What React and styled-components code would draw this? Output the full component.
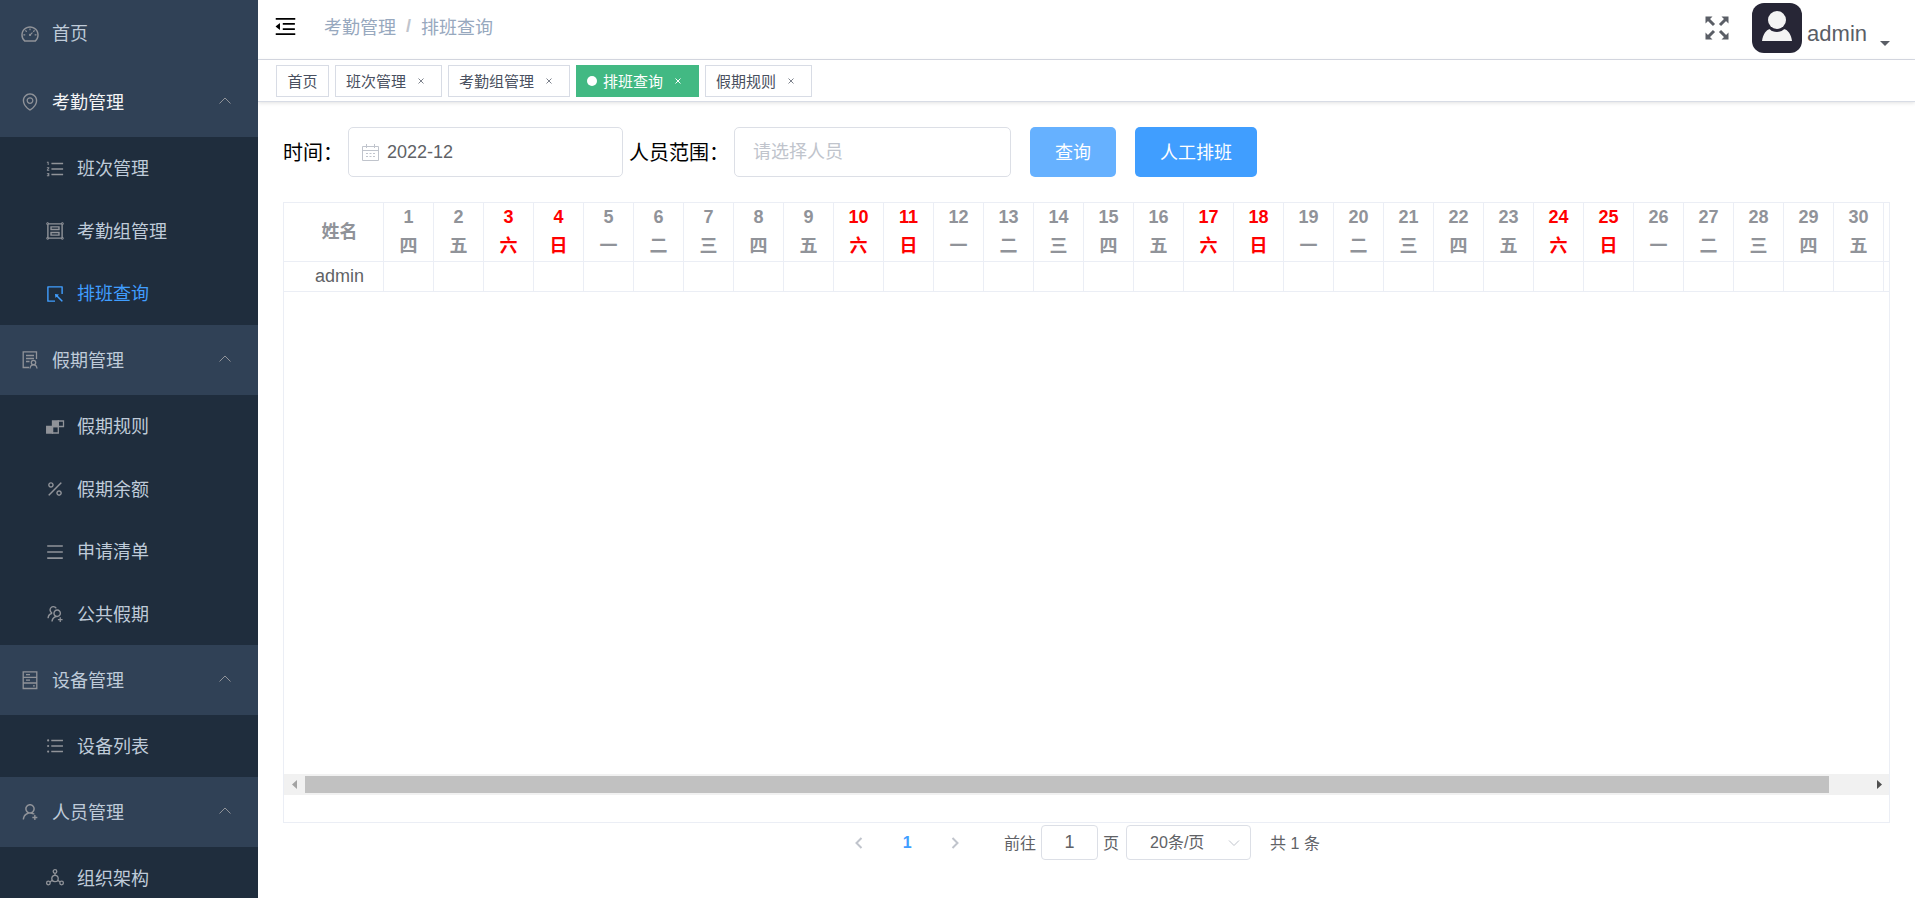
import React from 'react';
import styled, { createGlobalStyle } from 'styled-components';
import {
  AiOutlineDashboard,
  AiOutlineEnvironment,
  AiOutlineOrderedList,
  AiOutlineGroup,
  AiOutlineSelect,
  AiOutlinePercentage,
  AiOutlineMenu,
  AiOutlineUsergroupAdd,
  AiOutlineUnorderedList,
  AiOutlineUserAdd,
  AiOutlineMenuFold,
} from 'react-icons/ai';

const GlobalStyle = createGlobalStyle`
  * { box-sizing: border-box; }
  body {
    margin: 0;
    background: #fff;
    color: #606266;
    font-family: "Liberation Sans", "Noto Sans CJK SC", sans-serif;
    font-size: 18px;
  }
  button, input, select { font: inherit; color: inherit; margin: 0; }
  a { color: inherit; text-decoration: none; }
`;

const Page = styled.div`
  display: flex;
  min-height: 100vh;
`;

/* ---------- sidebar ---------- */

const Sidebar = styled.nav`
  flex: none;
  width: 258px;
  height: 100vh;
  position: sticky;
  top: 0;
  overflow: hidden;
  background: #304156;
  color: #bfcbd9;
  white-space: nowrap;
`;

const MenuIcon = styled.span`
  display: flex;
  color: ${(p) => (p.$active ? '#409eff' : '#909399')};
  svg { width: 20px; height: 20px; }
`;

const MenuText = styled.span`
  flex: 1;
  padding-bottom: 3px;
`;

const HomeLink = styled.a`
  display: flex;
  align-items: center;
  gap: 12px;
  height: 67px;
  padding-left: 20px;
`;

const GroupButton = styled.button`
  display: flex;
  align-items: center;
  gap: 12px;
  width: 100%;
  height: 70px;
  padding: 0 27px 0 20px;
  border: 0;
  background: transparent;
  color: ${(p) => (p.$active ? '#f4f4f5' : '#bfcbd9')};
  text-align: left;
`;

const SubMenu = styled.ul`
  margin: 0;
  padding: 0;
  list-style: none;
  background: #1f2d3d;
`;

const SubItem = styled.li`
  height: 62px;
  &:nth-child(odd):not(:only-child) { height: 63px; }
`;

const SubLink = styled.a`
  display: flex;
  align-items: center;
  gap: 12px;
  height: 100%;
  padding-left: 45px;
  color: ${(p) => (p.$active ? '#409eff' : '#bfcbd9')};
`;

const Chevron = styled.svg`
  width: 12px;
  height: 12px;
  fill: none;
  stroke: ${(p) => p.$color || '#909399'};
  stroke-width: ${(p) => p.$weight || 1};
`;

const LineIcon = ({ children }) => (
  <svg viewBox="0 0 20 20" fill="none" stroke="currentColor" strokeWidth="1.3" aria-hidden="true">
    {children}
  </svg>
);

const HolidayIcon = () => (
  <LineIcon>
    <path d="M9 17.500H3.200V1.800h13.300V9M6 5.500h8M6 8.500h8M6 11.500h3.500M3 17.500h6" />
    <circle cx="13.500" cy="12.500" r="2.200" />
    <path d="M10 18.500c.2-2.500 1.300-3.700 3.500-3.700s3.300 1.200 3.500 3.700" />
  </LineIcon>
);

const RulesIcon = () => (
  <LineIcon>
    <path d="M1.700 9.500h5.800v6.500H1.700zM7.500 4h5.800v5.500H7.500z" fill="currentColor" />
    <path d="M7.500 9.500h5.800V16H7.500zM13.300 4h5.200v5.500h-5.200z" />
  </LineIcon>
);

const DeviceIcon = () => (
  <LineIcon>
    <path d="M3.200 1.800h13.600v16.700H3.200zM3.200 7.400h13.600M3.200 13h13.600M6 4.600h4M6 10.200h4M13 15.800h1.800" />
  </LineIcon>
);

const OrganizationIcon = () => (
  <LineIcon>
    <circle cx="10" cy="10.500" r="3.200" />
    <circle cx="10" cy="3.500" r="1.800" />
    <circle cx="3.400" cy="15" r="1.800" />
    <circle cx="16.600" cy="15" r="1.800" />
    <path d="M10 5.300v2M5 14l2.200-1.700M15 14l-2.200-1.700" />
  </LineIcon>
);

const menu = [
  {
    label: '考勤管理',
    icon: AiOutlineEnvironment,
    active: true,
    items: [
      { label: '班次管理', icon: AiOutlineOrderedList },
      { label: '考勤组管理', icon: AiOutlineGroup },
      { label: '排班查询', icon: AiOutlineSelect, active: true },
    ],
  },
  {
    label: '假期管理',
    icon: HolidayIcon,
    items: [
      { label: '假期规则', icon: RulesIcon },
      { label: '假期余额', icon: AiOutlinePercentage },
      { label: '申请清单', icon: AiOutlineMenu },
      { label: '公共假期', icon: AiOutlineUsergroupAdd },
    ],
  },
  {
    label: '设备管理',
    icon: DeviceIcon,
    items: [{ label: '设备列表', icon: AiOutlineUnorderedList }],
  },
  {
    label: '人员管理',
    icon: AiOutlineUserAdd,
    items: [{ label: '组织架构', icon: OrganizationIcon }],
  },
];

function MenuGroup({ group }) {
  const Icon = group.icon;
  return (
    <>
      <GroupButton type="button" aria-expanded="true" $active={group.active}>
        <MenuIcon><Icon /></MenuIcon>
        <MenuText>{group.label}</MenuText>
        <Chevron viewBox="0 0 12 12" aria-hidden="true"><path d="M.5 7.500 6 2l5.500 5.500" /></Chevron>
      </GroupButton>
      <SubMenu>
        {group.items.map((item) => {
          const ItemIcon = item.icon;
          return (
            <SubItem key={item.label}>
              <SubLink href="#" $active={item.active}>
                <MenuIcon $active={item.active}><ItemIcon /></MenuIcon>
                <MenuText>{item.label}</MenuText>
              </SubLink>
            </SubItem>
          );
        })}
      </SubMenu>
    </>
  );
}

/* ---------- top bar ---------- */

const Main = styled.div`
  flex: 1;
  min-width: 0;
  display: flex;
  flex-direction: column;
`;

const TopBar = styled.header`
  display: flex;
  align-items: flex-start;
  height: 60px;
  padding: 0 25px 0 15px;
  border-bottom: 1px solid #d8dce5;
`;

const IconButton = styled.button`
  display: flex;
  padding: 0;
  border: 0;
  background: transparent;
  color: ${(p) => p.$color};
  svg { width: ${(p) => p.$size}px; height: ${(p) => p.$size}px; }
`;

const FoldSlot = styled.div`
  display: flex;
  align-items: center;
  height: 53px;
`;

const Breadcrumb = styled.nav`
  display: flex;
  flex: 1;
  align-items: center;
  gap: 10px;
  height: 52px;
  padding-left: 26px;
  color: #97a8be;
`;

const Slash = styled.span`
  color: #c0c4cc;
  font-weight: bold;
`;

const UserArea = styled.div`
  display: flex;
  align-items: center;
  height: 56px;
`;

const UserButton = styled.button`
  display: flex;
  align-items: flex-end;
  margin-left: 23px;
  padding: 0;
  border: 0;
  background: transparent;
  color: #5a5e66;
`;

const Avatar = styled.svg`
  width: 50px;
  height: 50px;
`;

const UserName = styled.span`
  padding: 0 13px 6px 5px;
  font-size: 22px;
  line-height: 26px;
`;

const Caret = styled.span`
  margin-bottom: 7px;
  border: 5px solid transparent;
  border-top-color: #5a5e66;
  border-bottom: 0;
`;

/* ---------- page tabs ---------- */

const TagBar = styled.div`
  display: flex;
  align-items: center;
  gap: 6px;
  height: 42px;
  padding: 0 18px;
  border-bottom: 1px solid #d8dce5;
  box-shadow: 0 1px 4px rgba(0, 0, 0, 0.12);
`;

const Tag = styled.div`
  display: flex;
  align-items: center;
  justify-content: center;
  min-width: 53px;
  height: 32px;
  padding: 0 10px;
  border: 1px solid ${(p) => (p.$active ? '#42b983' : '#d8dce5')};
  background: ${(p) => (p.$active ? '#42b983' : '#fff')};
  color: ${(p) => (p.$active ? '#fff' : '#495060')};
  font-size: 15px;
  white-space: nowrap;
`;

const Dot = styled.span`
  width: 10px;
  height: 10px;
  margin-right: 6px;
  border-radius: 50%;
  background: #fff;
`;

const CloseButton = styled.button`
  display: flex;
  align-items: center;
  justify-content: center;
  width: 20px;
  height: 20px;
  margin-left: 5px;
  padding: 1px 0 0;
  border: 0;
  background: transparent;
  color: ${(p) => (p.$active ? '#fff' : '#7d828c')};
  svg { width: 6px; height: 6px; }
`;

const tags = [
  { label: '首页', fixed: true },
  { label: '班次管理' },
  { label: '考勤组管理' },
  { label: '排班查询', active: true },
  { label: '假期规则' },
];

/* ---------- filters ---------- */

const Content = styled.main`
  flex: 1;
  display: flex;
  flex-direction: column;
  min-width: 0;
  padding: 25px 25px 38px;
`;

const FilterBar = styled.form`
  display: flex;
  align-items: center;
  margin-bottom: 25px;
`;

const FilterLabel = styled.label`
  margin-right: 5px;
  padding-bottom: 2px;
  color: #000;
  font-size: 20px;
  white-space: nowrap;
`;

const Field = styled.div`
  display: flex;
  align-items: center;
  gap: 8px;
  width: ${(p) => p.$width}px;
  height: 50px;
  margin-right: ${(p) => p.$after}px;
  padding: 0 ${(p) => p.$inset}px;
  border: 1px solid #dcdfe6;
  border-radius: 5px;
  svg { flex: none; width: 17px; height: 17px; }
`;

const TextInput = styled.input`
  flex: 1;
  min-width: 0;
  height: 46px;
  padding: 0;
  border: 0;
  outline: 0;
  background: transparent;
  &::placeholder { color: #c0c4cc; opacity: 1; }
`;

const PrimaryButton = styled.button`
  height: 50px;
  margin-right: 19px;
  padding: 0 25px 2px;
  border: 0;
  border-radius: 5px;
  background: ${(p) => (p.$hover ? '#66b1ff' : '#409eff')};
  color: #fff;
  white-space: nowrap;
`;

/* ---------- schedule table ---------- */

const TablePanel = styled.section`
  flex: 1;
  display: flex;
  flex-direction: column;
  padding-bottom: 27px;
  border: 1px solid #ebeef5;
`;

const TableViewport = styled.div`
  flex: 1;
  overflow: hidden;
`;

const Table = styled.table`
  width: 100%;
  min-width: 1600px;
  border-spacing: 0;
  table-layout: fixed;
  line-height: 29px;
`;

const Cell = styled.td`
  width: 50px;
  height: 30px;
  padding: 0;
  border: solid #ebeef5;
  border-width: 0 1px 1px 0;
  text-align: center;
`;

const EdgeCell = styled(Cell)`
  width: auto;
  border-right: 0;
`;

const HeadCell = styled(Cell)`
  color: ${(p) => (p.$weekend ? '#f00' : '#909399')};
  font-weight: bold;
`;

const NameHead = styled(HeadCell)`
  width: 100px;
  padding-left: 12px;
`;

const NameCell = styled(Cell)`
  padding-left: 12px;
`;

const DayLine = styled.div`
  height: 29px;
`;

const ScrollTrack = styled.div`
  display: flex;
  height: 21px;
  background: #f1f1f1;
`;

const ScrollArrow = styled.svg`
  flex: none;
  width: 21px;
  height: 21px;
  fill: ${(p) => p.$color};
`;

const ThumbLane = styled.div`
  flex: 1;
  padding: 2px 0;
`;

const Thumb = styled.div`
  width: ${(p) => p.$share}%;
  height: 17px;
  background: #c1c1c1;
`;

const weekdays = ['日', '一', '二', '三', '四', '五', '六'];
const days = Array.from({ length: 30 }, (_, i) => {
  const weekday = (i + 4) % 7;
  return { date: i + 1, name: weekdays[weekday], weekend: weekday === 0 || weekday === 6 };
});

/* ---------- pagination ---------- */

const Pagination = styled.div`
  display: flex;
  align-items: center;
  justify-content: center;
  height: 35px;
  margin-top: 2px;
  padding-right: 16px;
  font-size: 16px;
  white-space: nowrap;
`;

const PageButton = styled.button`
  display: flex;
  align-items: center;
  justify-content: center;
  width: 44px;
  height: 35px;
  margin-right: 4px;
  padding: 0;
  border: 0;
  background: transparent;
  color: #409eff;
  font-weight: bold;
`;

const Jump = styled.div`
  display: flex;
  align-items: center;
  gap: 5px;
  margin: 0 7px 0 23px;
`;

const PagerText = styled.span`
  padding-bottom: 2px;
`;

const JumpInput = styled.input`
  width: 57px;
  height: 35px;
  padding: 0;
  border: 1px solid #dcdfe6;
  border-radius: 4px;
  outline: 0;
  background: #fff;
  font-size: 18px;
  text-align: center;
`;

const SizePicker = styled.div`
  display: flex;
  align-items: center;
  width: 125px;
  height: 35px;
  margin-right: 19px;
  padding-right: 10px;
  border: 1px solid #dcdfe6;
  border-radius: 4px;
  svg { flex: none; }
`;

const SizeSelect = styled.select`
  flex: 1;
  min-width: 0;
  height: 33px;
  padding: 0 0 0 23px;
  border: 0;
  outline: 0;
  background: transparent;
  appearance: none;
`;

export default function App() {
  return (
    <>
      <GlobalStyle />
      <Page>
        <Sidebar>
          <HomeLink href="#">
            <MenuIcon><AiOutlineDashboard /></MenuIcon>
            <MenuText>首页</MenuText>
          </HomeLink>
          {menu.map((group) => <MenuGroup key={group.label} group={group} />)}
        </Sidebar>

        <Main>
          <TopBar>
            <FoldSlot>
              <IconButton type="button" aria-label="折叠菜单" $color="#000" $size={25}>
                <AiOutlineMenuFold />
              </IconButton>
            </FoldSlot>
            <Breadcrumb>
              <span>考勤管理</span>
              <Slash>/</Slash>
              <span>排班查询</span>
            </Breadcrumb>
            <UserArea>
              <IconButton type="button" aria-label="全屏" $color="#5a5e66" $size={24}>
                <svg viewBox="0 0 24 24" fill="currentColor" stroke="currentColor">
                  <g strokeWidth="3">
                    <path d="M3 3l6 6M21 3l-6 6M3 21l6-6M21 21l-6-6" />
                  </g>
                  <path stroke="none" d="M.5.5h7l-7 7zM23.500.5h-7l7 7zM.5 23.500h7l-7-7zM23.500 23.500h-7l7-7z" />
                </svg>
              </IconButton>
              <UserButton type="button">
                <Avatar viewBox="0 0 50 50" aria-hidden="true">
                  <rect width="50" height="50" rx="12" fill="#272636" />
                  <path d="M10 38c1-7 4-11 8-12h14c4 1 7 5 8 12z" fill="#f4f4f4" />
                  <circle cx="25" cy="18" r="11" fill="#272636" />
                  <circle cx="25" cy="17" r="9" fill="#f4f4f4" />
                </Avatar>
                <UserName>admin</UserName>
                <Caret />
              </UserButton>
            </UserArea>
          </TopBar>

          <TagBar>
            {tags.map((tag) => (
              <Tag key={tag.label} $active={tag.active}>
                {tag.active && <Dot />}
                <a href="#">{tag.label}</a>
                {!tag.fixed && (
                  <CloseButton type="button" aria-label="关闭" $active={tag.active}>
                    <svg viewBox="0 0 6 6" stroke="currentColor"><path d="M.5.5l5 5M5.500.5l-5 5" /></svg>
                  </CloseButton>
                )}
              </Tag>
            ))}
          </TagBar>

          <Content>
            <FilterBar>
              <FilterLabel htmlFor="month">时间：</FilterLabel>
              <Field $width={275} $inset={13} $after={6}>
                <svg viewBox="0 0 17 17" fill="none" stroke="#c0c4cc" aria-hidden="true">
                  <path d="M.5 2.500h16v14H.5zM.5 6.500h16M4.500 0v4M12.500 0v4" />
                  <path d="M4 9.500h2m1.500 0h2m1.500 0h2M4 12.500h2m1.500 0h2m1.500 0h2" />
                </svg>
                <TextInput id="month" defaultValue="2022-12" />
              </Field>
              <FilterLabel htmlFor="people">人员范围：</FilterLabel>
              <Field $width={277} $inset={18} $after={19}>
                <TextInput id="people" placeholder="请选择人员" />
              </Field>
              <PrimaryButton type="button" $hover>查询</PrimaryButton>
              <PrimaryButton type="button">人工排班</PrimaryButton>
            </FilterBar>

            <TablePanel>
              <TableViewport>
                <Table>
                  <thead>
                    <tr>
                      <NameHead as="th" scope="col">姓名</NameHead>
                      {days.map((day) => (
                        <HeadCell as="th" scope="col" key={day.date} $weekend={day.weekend}>
                          <DayLine>{day.date}</DayLine>
                          <DayLine>{day.name}</DayLine>
                        </HeadCell>
                      ))}
                      <EdgeCell />
                    </tr>
                  </thead>
                  <tbody>
                    <tr>
                      <NameCell>admin</NameCell>
                      {days.map((day) => <Cell key={day.date} />)}
                      <EdgeCell />
                    </tr>
                  </tbody>
                </Table>
              </TableViewport>
              <ScrollTrack>
                <ScrollArrow viewBox="0 0 21 21" $color="#a3a3a3"><path d="M13 6v9L8 10.500z" /></ScrollArrow>
                <ThumbLane><Thumb $share={97.5} /></ThumbLane>
                <ScrollArrow viewBox="0 0 21 21" $color="#505050"><path d="M9 6v9l5-4.500z" /></ScrollArrow>
              </ScrollTrack>
            </TablePanel>

            <Pagination>
              <PageButton type="button" aria-label="上一页">
                <Chevron viewBox="0 0 12 12" $color="#c0c4cc" $weight={2}><path d="M8.500 1 3.500 6l5 5" /></Chevron>
              </PageButton>
              <PageButton type="button" aria-current="page">1</PageButton>
              <PageButton type="button" aria-label="下一页">
                <Chevron viewBox="0 0 12 12" $color="#c0c4cc" $weight={2}><path d="M3.500 1l5 5-5 5" /></Chevron>
              </PageButton>
              <Jump>
                <PagerText as="label" htmlFor="jump">前往</PagerText>
                <JumpInput id="jump" defaultValue="1" />
                <PagerText>页</PagerText>
              </Jump>
              <SizePicker>
                <SizeSelect aria-label="每页条数" defaultValue="20">
                  <option value="20">20条/页</option>
                </SizeSelect>
                <Chevron viewBox="0 0 12 12" $color="#c0c4cc"><path d="M1 3.500l5 5 5-5" /></Chevron>
              </SizePicker>
              <PagerText>共 1 条</PagerText>
            </Pagination>
          </Content>
        </Main>
      </Page>
    </>
  );
}
